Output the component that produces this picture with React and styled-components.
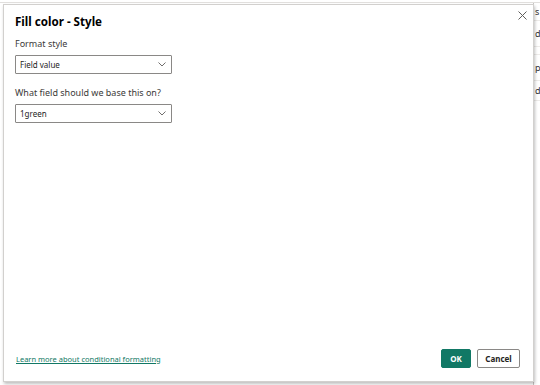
import React from 'react'
import styled, { createGlobalStyle } from 'styled-components'

const Global = createGlobalStyle`
  html, body { margin: 0; padding: 0; background: #fff; }
  body { font-family: "Noto Sans", "Open Sans", sans-serif; color: #252423; }
  * { box-sizing: border-box; }
`

const Page = styled.div`
  position: relative;
  width: 540px;
  height: 385px;
  overflow: hidden;
  display: flex;
  border-top: 1px solid #e1dfdd;
  margin-top: 2px;
`
const Canvas = styled.div`
  flex: 1;
`
const SidePanel = styled.div`
  width: 7px;
  border-left: 1px solid #c8c6c4;
  display: flex;
  flex-direction: column;
  font-size: 9px;
  color: #333;
  overflow: hidden;
`
const SideRow = styled.div`
  height: ${p => p.h}px;
  padding-left: 1px;
  display: flex;
  align-items: center;
  border-bottom: 1px solid #edebe9;
`

const Dialog = styled.div`
  position: absolute;
  left: 3px;
  top: 1px;
  width: 531px;
  height: 378px;
  background: #fff;
  border: 1px solid #d2d0ce;
  box-shadow: 1px 2px 3px rgba(0, 0, 0, 0.25);
  padding: 9px 12px 13px 11px;
  display: flex;
  flex-direction: column;
`
const Close = styled.button`
  position: absolute;
  right: 4px;
  top: 3px;
  width: 14px;
  height: 14px;
  border: 0;
  background: none;
  padding: 0;
  display: flex;
  align-items: center;
  justify-content: center;
`
const Title = styled.h1`
  margin: 0;
  font-size: 11.6px;
  font-weight: 700;
  color: #000;
  line-height: 16px;
`
const Body = styled.div`
  flex: 1;
  display: flex;
  flex-direction: column;
`
const Label = styled.div`
  font-size: 9px;
  color: #3b3a39;
  line-height: 13px;
  margin-top: ${p => p.mt}px;
`
const Select = styled.div`
  width: 157px;
  height: 19px;
  margin-top: 5px;
  border: 1px solid #8a8886;
  border-radius: 1px;
  display: flex;
  align-items: center;
  justify-content: space-between;
  padding: 0 5px 0 4px;
  font-size: 8px;
  color: #252423;
`
const Footer = styled.div`
  display: flex;
  align-items: center;
  justify-content: space-between;
`
const Link = styled.a`
  font-size: 7.5px;
  color: #117865;
  text-decoration: underline;
  margin-left: 1px;
`
const Buttons = styled.div`
  display: flex;
  gap: 6px;
  margin-right: 1px;
`
const Button = styled.button`
  height: 19px;
  min-width: ${p => p.w}px;
  padding: 0 6px;
  font-family: "Noto Sans", sans-serif;
  font-size: 8px;
  font-weight: 700;
  border-radius: 2px;
  border: 1px solid ${p => (p.primary ? '#117865' : '#8a8886')};
  background: ${p => (p.primary ? '#117865' : '#fff')};
  color: ${p => (p.primary ? '#fff' : '#252423')};
`

const Chevron = () => (
  <svg width="8" height="5" viewBox="0 0 8 5">
    <path d="M0.5 0.5 L4 4 L7.5 0.5" fill="none" stroke="#605e5c" strokeWidth="0.9" />
  </svg>
)

const XIcon = () => (
  <svg width="9" height="9" viewBox="0 0 9 9">
    <path d="M0.5 0.5 L8.5 8.5 M8.5 0.5 L0.5 8.5" stroke="#605e5c" strokeWidth="1" />
  </svg>
)

export default function App() {
  return (
    <>
      <Global />
      <Page>
        <Canvas />
        <SidePanel>
          <SideRow h={18}>s</SideRow>
          <SideRow h={26}>d</SideRow>
          <SideRow h={8} />
          <SideRow h={26}>p</SideRow>
          <SideRow h={20}>d</SideRow>
        </SidePanel>
        <Dialog>
          <Close aria-label="Close"><XIcon /></Close>
          <Title>Fill color - Style</Title>
          <Body>
            <Label mt={7}>Format style</Label>
            <Select>Field value<Chevron /></Select>
            <Label mt={12}>What field should we base this on?</Label>
            <Select>1green<Chevron /></Select>
          </Body>
          <Footer>
            <Link href="#">Learn more about conditional formatting</Link>
            <Buttons>
              <Button primary w={30}>OK</Button>
              <Button w={43}>Cancel</Button>
            </Buttons>
          </Footer>
        </Dialog>
      </Page>
    </>
  )
}
